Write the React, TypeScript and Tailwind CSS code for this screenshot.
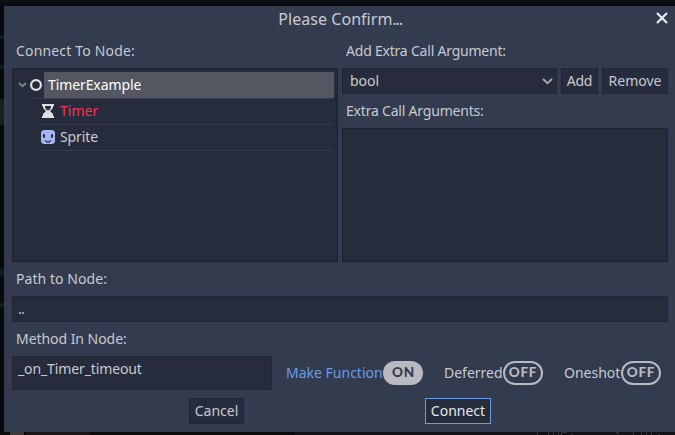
import type { ReactNode } from 'react';

function Toggle({ on }: { on?: boolean }) {
  return (
    <span
      className={
        on
          ? "flex h-6 w-10 items-center justify-center rounded-full bg-[#b9bac0] pl-px font-['Lato','Noto_Sans',sans-serif] text-[13.5px] font-black leading-none tracking-[0.8px] text-[#333b4f]"
          : "flex h-6 w-10 items-center justify-center rounded-full border-2 border-[#b9bac0] font-['Lato','Noto_Sans',sans-serif] text-[13.5px] font-black leading-none tracking-[0.8px] text-[#b9bac0]"
      }
    >
      {on ? 'ON' : 'OFF'}
    </span>
  );
}

function Label({ children }: { children: ReactNode }) {
  return <div className="flex h-[34px] items-center pl-1">{children}</div>;
}

export default function App() {
  return (
    <div className="h-[435px] w-[675px] overflow-hidden whitespace-pre bg-[#090b0f] font-['Noto_Sans',sans-serif] text-[14px] leading-5 text-[#c8cacf]">
      <div className="h-1.5 bg-linear-to-b from-[#0e1116] to-[#07080c]" />
      <div className="flex h-[426px]">
        <div className="flex w-1 flex-col bg-[#08090c]">
          <div className="mt-[29px] h-1 bg-[#171b21]" />
          <div className="mt-[26px] h-1 bg-[#151a20]" />
          <div className="mt-[30px] h-[26px] bg-[#1c1d20]" />
          <div className="mt-[144px] h-2 bg-[#12171e]" />
          <div className="mt-[26px] h-1 bg-[#141a21]" />
        </div>
        <div className="flex flex-1 flex-col bg-[#333b4f] pl-2 pr-[7px]">
          <div className="flex h-7 shrink-0 items-start">
            <div className="w-[656px] text-center text-[16px] leading-[26px] tracking-[0.05px]">
              Please Confirm<span className="tracking-[-1.2px]">...</span>
            </div>
            <svg viewBox="0 0 12 12" className="-ml-3 mt-1.5 h-3 w-3 shrink-0" stroke="#e8e9eb" strokeWidth="2.2">
              <path d="M1 1 11 11M11 1 1 11" />
            </svg>
          </div>
          <div className="flex h-[228px] shrink-0 gap-1">
            <div className="w-[326px]">
              <Label><span className="tracking-[0.17px]">Connect To Node:</span></Label>
              <div className="h-[194px] border border-[#1b202b] bg-[#262c3b] p-[3px]">
                <div className="flex h-[26px] items-center">
                  <svg viewBox="0 0 9 6" className="ml-[1.5px] h-[6px] w-[9px]" fill="none">
                    <path d="M1 1 4.5 4.2 8 1" stroke="#7d8189" strokeWidth="2" />
                  </svg>
                  <svg viewBox="0 0 12 12" className="ml-[3.5px] h-3 w-3">
                    <circle cx="6" cy="6" r="4.9" fill="none" stroke="#e0e0e0" strokeWidth="2.2" />
                  </svg>
                  <span className="ml-0.5 flex h-[26px] flex-1 items-center bg-[#535761] pl-1 tracking-[-0.1px] text-white">TimerExample</span>
                </div>
                <div className="ml-3 flex h-[26px] items-center border-t border-[#343a48] pb-[2px]">
                  <svg viewBox="0 0 12 14" className="ml-[14px] h-[14px] w-3">
                    <path fill="#e0e0e0" d="M0 0H12V2H11V4L8 7 11 10V12H12V14H0V12H1V10L4 7 1 4V2H0Z" />
                    <path fill="#262c3b" d="M3.2 2H8.8V4L7 6.2H5L3.2 4Z" />
                  </svg>
                  <span className="ml-[6px] text-[#ff3050]">Timer</span>
                </div>
                <div className="ml-6 flex h-[26px] items-center border-t border-[#343a48] pb-[2px]">
                  <svg viewBox="0 0 14 14" className="ml-px h-[14px] w-[14px]">
                    <rect width="14" height="14" rx="3.5" fill="#a5b7f3" />
                    <path d="M2 4.2h2v3.6H2zM10 4.2h2v3.6h-2z" fill="#262c3b" />
                    <path d="M4.2 10.4Q7 14 9.8 10.4" fill="none" stroke="#262c3b" strokeWidth="1.5" />
                  </svg>
                  <span className="ml-[5px] tracking-[-0.1px]">Sprite</span>
                </div>
                <div className="ml-6 h-px bg-[#343a48]" />
              </div>
            </div>
            <div className="w-[326px]">
              <Label><span className="tracking-[-0.21px]">Add Extra Call Argument:</span></Label>
              <div className="flex h-[26px] gap-1">
                <div className="flex w-[215px] items-center justify-between border border-[#202631] bg-[#262c3b] pl-[7px] pr-[3.5px]">
                  <span>bool</span>
                  <svg viewBox="0 0 11 7" className="h-[7px] w-[11px]" fill="none">
                    <path d="M1 1 5.5 5.2 10 1" stroke="#a5a8af" strokeWidth="2" />
                  </svg>
                </div>
                <div className="flex w-[37px] items-center justify-center border border-[#202631] bg-[#262c3b] tracking-[-0.2px]">Add</div>
                <div className="flex w-[66px] items-center justify-center border border-[#202631] bg-[#262c3b]">Remove</div>
              </div>
              <Label><span className="tracking-[-0.2px]">Extra Call Arguments:</span></Label>
              <div className="h-[134px] border border-[#1b202b] bg-[#262c3b]" />
            </div>
          </div>
          <Label><span className="tracking-[0.06px]">Path to Node:</span></Label>
          <div className="flex h-[26px] w-[656px] shrink-0 items-center border border-[#202631] bg-[#262c3b] pl-[5px] tracking-[-0.7px]">..</div>
          <Label><span className="tracking-[-0.05px]">Method In Node:</span></Label>
          <div className="flex h-[34px] shrink-0">
            <div className="w-[260px] border border-[#202631] bg-[#262c3b] pl-[5px] pt-[2px] tracking-[-0.12px]">_on_Timer_timeout</div>
            <div className="ml-[14px] flex w-[137px] items-center justify-between text-[#699ce8]">
              Make Function
              <Toggle on />
            </div>
            <div className="ml-[21px] flex w-[99px] items-center justify-between">
              Deferred
              <Toggle />
            </div>
            <div className="ml-[21px] flex w-[97px] items-center justify-between">
              Oneshot
              <Toggle />
            </div>
          </div>
          <div className="mt-2 flex h-[26px] shrink-0">
            <div className="ml-[177px] flex w-[55px] items-center justify-center border border-[#202631] bg-[#262c3b]">Cancel</div>
            <div className="ml-[181px] flex w-[66px] items-center justify-center border border-[#699ce8] bg-[#262c3b] text-[#e4e6ea]">Connect</div>
          </div>
        </div>
      </div>
      <div className="flex h-[3px] bg-[#0b0b0d]">
        <div className="ml-[10px] h-[3px] w-[14px] bg-[#3b3a3d]" />
        <div className="ml-0.5 h-[3px] w-16 bg-[#1c1716]" />
        <div className="ml-[204px] h-[3px] flex-1 bg-[#111216]">
          <svg viewBox="294 0 381 3" className="h-[3px] w-[381px]" stroke="#36373b" fill="none">
            <path d="M537.5 0v3M548.5 0v3M553.5 0v3M558.5 0v3M561.5 3V.5H567M571 2.5h2M616 .5h2v2.5M633.5 0v3M641.5 0v3M646.5 0v3M651.5 0v3M658 2.5h2" />
          </svg>
        </div>
      </div>
    </div>
  );
}
